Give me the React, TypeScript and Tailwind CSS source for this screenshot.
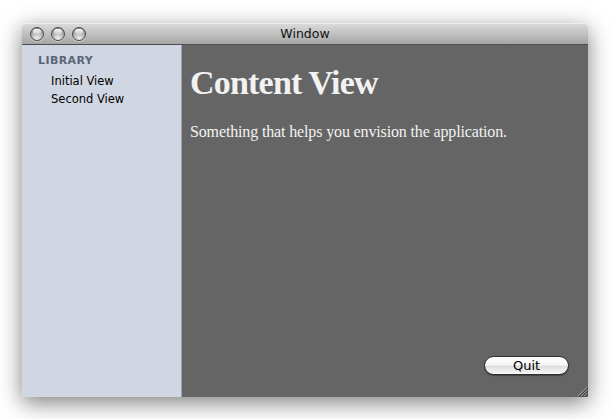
import React from "react";

function Light() {
  return (
    <div className="w-[14px] h-[14px] rounded-full border border-[#4a4a4a] bg-[radial-gradient(circle_at_50%_85%,#f0f0f0_0%,#bdbdbd_40%,#7c7c7c_100%)] relative overflow-hidden shadow-[0_1px_0_rgba(255,255,255,0.4)]">
      <div className="absolute left-[2px] top-[1px] w-[8px] h-[5px] rounded-full bg-[linear-gradient(#ffffff,#cfcfcf)] opacity-90" />
    </div>
  );
}

export default function App() {
  return (
    <div className="w-[612px] h-[419px] bg-white pl-[22px] pt-[23px] overflow-hidden">
      <div className="w-[566px] h-[374px] flex flex-col shadow-[0_6px_22px_rgba(0,0,0,0.5)] rounded-t-[4px]">
        <div className="h-[22px] grid grid-cols-[1fr_auto_1fr] items-center border-b border-[#4f4f4f] bg-[linear-gradient(#dcdcdc,#a6a6a6)] rounded-t-[4px] shadow-[inset_0_1px_0_#eeeeee]">
          <div className="flex items-center gap-[7px] pl-[8px]">
            <Light />
            <Light />
            <Light />
          </div>
          <div className="text-[12.5px] text-[#111] font-['DejaVu_Sans',sans-serif] leading-none pt-[1px]">Window</div>
          <div />
        </div>
        <div className="flex flex-1 min-h-0">
          <div className="w-[160px] bg-[#d1d7e2] border-r border-[#9ea5b1] pt-[10px] pl-[16px] font-['DejaVu_Sans',sans-serif]">
            <div className="text-[11px] font-bold leading-none text-[#5a6579] tracking-[0.4px]">LIBRARY</div>
            <div className="mt-[6px] pl-[13px] text-[11.5px] text-black">
              <div className="h-[18px] leading-[18px]">Initial View</div>
              <div className="h-[18px] leading-[18px]">Second View</div>
            </div>
          </div>
          <div className="relative flex-1 bg-[#656565] flex flex-col pl-[8px] pt-[21px] pr-[19px] pb-[22px] font-['Liberation_Serif',serif] text-[#f2f2f2]">
            <h1 className="text-[34px] font-bold leading-none tracking-[-0.8px]">Content View</h1>
            <p className="mt-[24px] text-[16px] leading-none tracking-[-0.14px]">Something that helps you envision the application.</p>
            <button className="mt-auto self-end w-[85px] h-[19px] rounded-full border border-[#2e2e2e] bg-[linear-gradient(#ffffff_0%,#f6f6f6_45%,#dedede_55%,#f8f8f8_100%)] text-[13px] leading-none text-black font-['DejaVu_Sans',sans-serif] flex items-center justify-center shadow-[0_1px_1px_rgba(0,0,0,0.35)]">
              Quit
            </button>
            <svg className="absolute right-0 bottom-0" width="12" height="12" viewBox="0 0 12 12">
              <line x1="11" y1="2" x2="2" y2="11" stroke="#9a9a9a" strokeWidth="1" />
              <line x1="11" y1="5" x2="5" y2="11" stroke="#9a9a9a" strokeWidth="1" />
              <line x1="11" y1="8" x2="8" y2="11" stroke="#9a9a9a" strokeWidth="1" />
              <line x1="12" y1="3" x2="3" y2="12" stroke="#3c3c3c" strokeWidth="1" />
              <line x1="12" y1="6" x2="6" y2="12" stroke="#3c3c3c" strokeWidth="1" />
              <line x1="12" y1="9" x2="9" y2="12" stroke="#3c3c3c" strokeWidth="1" />
            </svg>
          </div>
        </div>
      </div>
    </div>
  );
}
